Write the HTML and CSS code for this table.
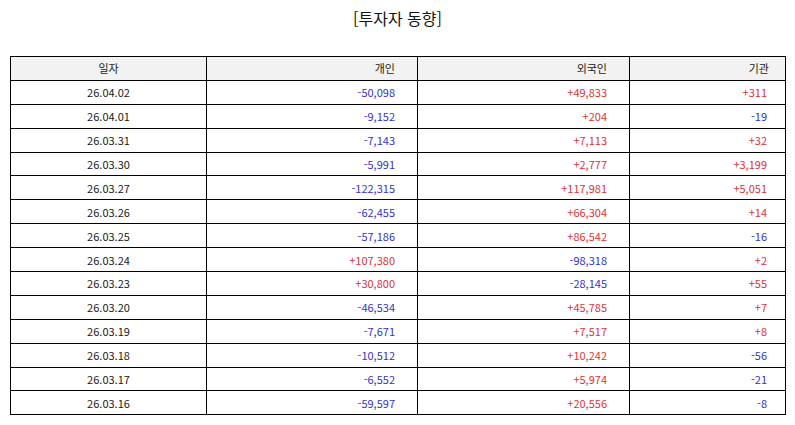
FILE: index.html
```html
<!DOCTYPE html>
<html lang="ko">
<head>
<meta charset="utf-8">
<title>투자자 동향</title>
<link rel="stylesheet" href="styles.css">
</head>
<body>
<div class="page">
  <h1 class="title">[투자자 동향]</h1>
  <table class="grid">
    <colgroup>
      <col class="c-date"><col class="c-ind"><col class="c-for"><col class="c-inst">
    </colgroup>
    <thead>
      <tr><th class="date">일자</th><th class="num">개인</th><th class="num">외국인</th><th class="num last">기관</th></tr>
    </thead>
    <tbody>
      <tr><td class="date">26.04.02</td><td class="num neg">-50,098</td><td class="num pos">+49,833</td><td class="num last pos">+311</td></tr>
      <tr><td class="date">26.04.01</td><td class="num neg">-9,152</td><td class="num pos">+204</td><td class="num last neg">-19</td></tr>
      <tr><td class="date">26.03.31</td><td class="num neg">-7,143</td><td class="num pos">+7,113</td><td class="num last pos">+32</td></tr>
      <tr><td class="date">26.03.30</td><td class="num neg">-5,991</td><td class="num pos">+2,777</td><td class="num last pos">+3,199</td></tr>
      <tr><td class="date">26.03.27</td><td class="num neg">-122,315</td><td class="num pos">+117,981</td><td class="num last pos">+5,051</td></tr>
      <tr><td class="date">26.03.26</td><td class="num neg">-62,455</td><td class="num pos">+66,304</td><td class="num last pos">+14</td></tr>
      <tr><td class="date">26.03.25</td><td class="num neg">-57,186</td><td class="num pos">+86,542</td><td class="num last neg">-16</td></tr>
      <tr><td class="date">26.03.24</td><td class="num pos">+107,380</td><td class="num neg">-98,318</td><td class="num last pos">+2</td></tr>
      <tr><td class="date">26.03.23</td><td class="num pos">+30,800</td><td class="num neg">-28,145</td><td class="num last pos">+55</td></tr>
      <tr><td class="date">26.03.20</td><td class="num neg">-46,534</td><td class="num pos">+45,785</td><td class="num last pos">+7</td></tr>
      <tr><td class="date">26.03.19</td><td class="num neg">-7,671</td><td class="num pos">+7,517</td><td class="num last pos">+8</td></tr>
      <tr><td class="date">26.03.18</td><td class="num neg">-10,512</td><td class="num pos">+10,242</td><td class="num last neg">-56</td></tr>
      <tr><td class="date">26.03.17</td><td class="num neg">-6,552</td><td class="num pos">+5,974</td><td class="num last neg">-21</td></tr>
      <tr><td class="date">26.03.16</td><td class="num neg">-59,597</td><td class="num pos">+20,556</td><td class="num last neg">-8</td></tr>
    </tbody>
  </table>
</div>
</body>
</html>
```
FILE: styles.css
```css
html, body {
  margin: 0;
  padding: 0;
  background: #ffffff;
}
body {
  font-family: "Noto Sans CJK KR", "Noto Sans", sans-serif;
  color: #1a1a1a;
}
.page {
  width: 795px;
  height: 425px;
  padding-top: 7px;
  box-sizing: border-box;
}
.title {
  margin: 0;
  font-size: 16px;
  font-weight: normal;
  line-height: 22px;
  text-align: center;
  color: #111;
}
.grid {
  margin: 27px 0 0 10px;
  width: 775px;
  table-layout: fixed;
  border-collapse: collapse;
  font-size: 11px;
}
.c-date { width: 196px; }
.c-ind { width: 211px; }
.c-for { width: 212px; }
.c-inst { width: 156px; }
.grid th, .grid td {
  border: 1px solid #000;
  height: 22.9px;
  padding: 0;
  font-weight: normal;
  line-height: 14px;
  vertical-align: middle;
}
.grid thead th {
  background: #f2f2f2;
}
.grid .date { text-align: center; }
.grid .num { text-align: right; padding-right: 22px; }
.grid td.last { padding-right: 18px; }
.grid th.last { padding-right: 16px; }
.neg { color: #3232d2; }
.pos { color: #e03232; }
```
